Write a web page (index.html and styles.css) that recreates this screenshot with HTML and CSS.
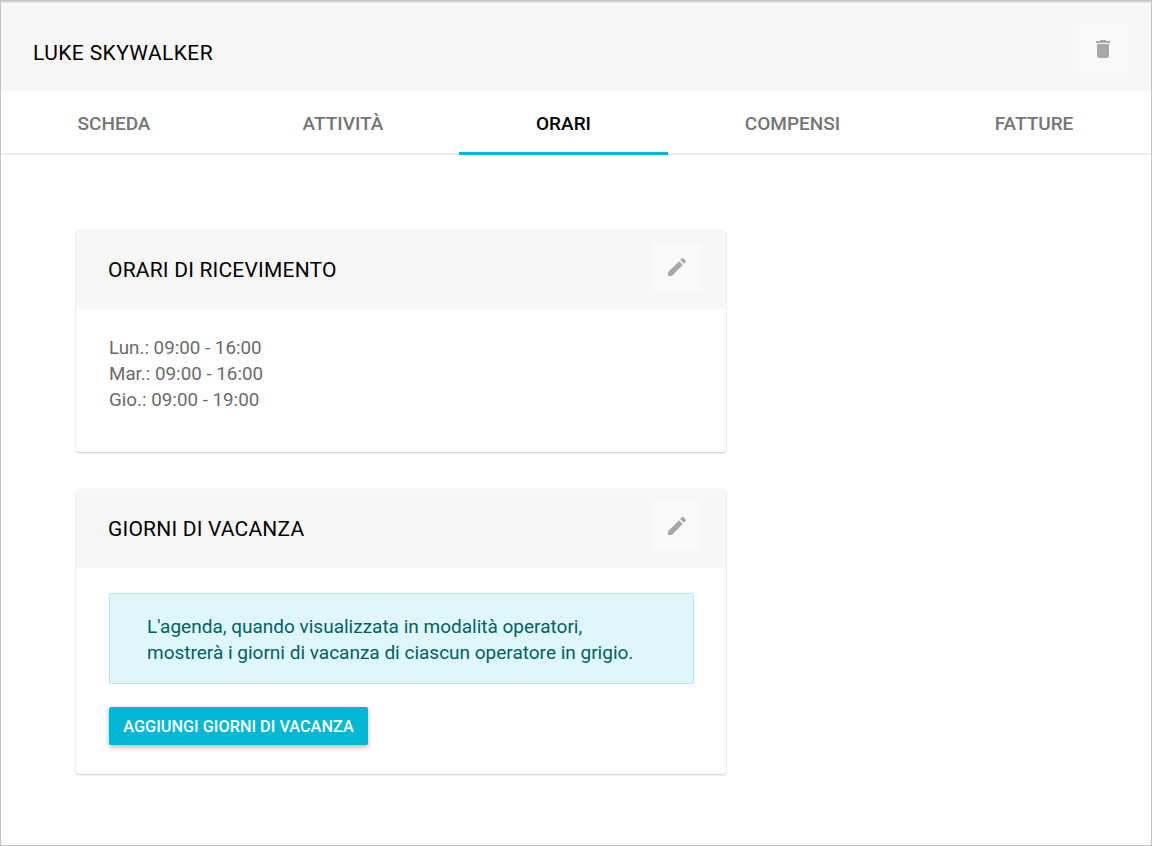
FILE: index.html
```html
<!DOCTYPE html>
<html lang="it">
<head>
<meta charset="utf-8">
<title>Luke Skywalker</title>
<link rel="stylesheet" href="styles.css">
</head>
<body>
<div class="window">
  <header class="top">
    <h1 class="top-title">LUKE SKYWALKER</h1>
    <button class="icon-btn" aria-label="Elimina">
      <svg viewBox="0 0 24 24" width="24" height="24"><path d="M6 19c0 1.100.9 2 2 2h8c1.100 0 2-.9 2-2V7H6v12zM19 4h-3.500l-1-1h-5l-1 1H5v2h14V4z"/></svg>
    </button>
  </header>
  <nav class="tabs">
    <a class="tab">SCHEDA</a>
    <a class="tab">ATTIVITÀ</a>
    <a class="tab tab-active">ORARI</a>
    <a class="tab">COMPENSI</a>
    <a class="tab">FATTURE</a>
  </nav>
  <main class="content">
    <section class="card">
      <div class="card-head">
        <h2 class="card-title">ORARI DI RICEVIMENTO</h2>
        <button class="icon-btn" aria-label="Modifica">
          <svg viewBox="0 0 24 24" width="24" height="24"><path d="M3 17.250V21h3.750L17.810 9.940l-3.750-3.750L3 17.250zM20.710 7.040a1 1 0 0 0 0-1.410l-2.340-2.340a1 1 0 0 0-1.410 0l-1.830 1.830 3.750 3.750 1.830-1.830z"/></svg>
        </button>
      </div>
      <div class="card-body hours">
        <div>Lun.: 09:00 - 16:00</div>
        <div>Mar.: 09:00 - 16:00</div>
        <div>Gio.: 09:00 - 19:00</div>
      </div>
    </section>
    <section class="card">
      <div class="card-head">
        <h2 class="card-title">GIORNI DI VACANZA</h2>
        <button class="icon-btn" aria-label="Modifica">
          <svg viewBox="0 0 24 24" width="24" height="24"><path d="M3 17.250V21h3.750L17.810 9.940l-3.750-3.750L3 17.250zM20.710 7.040a1 1 0 0 0 0-1.410l-2.340-2.340a1 1 0 0 0-1.410 0l-1.830 1.830 3.750 3.750 1.830-1.830z"/></svg>
        </button>
      </div>
      <div class="card-body vacation">
        <div class="notice">L'agenda, quando visualizzata in modalità operatori,<br>mostrerà i giorni di vacanza di ciascun operatore in grigio.</div>
        <button class="primary">AGGIUNGI GIORNI DI VACANZA</button>
      </div>
    </section>
  </main>
</div>
</body>
</html>
```
FILE: styles.css
```css
* { box-sizing: border-box; }
html, body { margin: 0; height: 100%; }
body { background: #fff; font-family: Roboto, "Liberation Sans", sans-serif; }
.window {
  height: 846px;
  border: 1px solid #c4c4c4;
  border-top: 0;
  display: flex;
  flex-direction: column;
  overflow: hidden;
}
.top {
  height: 91px;
  flex: none;
  background: #f7f7f7;
  box-shadow: inset 0 3px 2px -1px #c4c4c4;
  display: flex;
  align-items: center;
  justify-content: space-between;
  padding: 7px 24px 0 32px;
}
.top-title { margin: 8px 0 0; font-size: 21px; font-weight: 400; letter-spacing: .4px; color: #000; }
.icon-btn {
  width: 48px;
  height: 48px;
  padding: 0;
  border: 0;
  background: #fafafa;
  display: flex;
  align-items: center;
  justify-content: center;
  fill: #a8a8a8;
}
.tabs {
  height: 64px;
  flex: none;
  display: grid;
  grid-template-columns: 226px 232px 209px 249px 234px;
  border-bottom: 2px solid #ededed;
}
.tab {
  display: flex;
  align-items: center;
  justify-content: center;
  font-size: 19px;
  font-weight: 500;
  color: #757575;
  margin-bottom: -2px;
  padding-top: 1px;
}
.tab-active { color: #000; box-shadow: inset 0 -3px 0 #00b8d4; }
.content { padding: 75px 0 0 75px; display: flex; flex-direction: column; gap: 37px; }
.card {
  width: 650px;
  background: #fff;
  border-radius: 3px;
  box-shadow: 0 1px 2px rgba(0,0,0,.2), 0 0 1px rgba(0,0,0,.08);
}
.card-head {
  height: 79px;
  background: #f7f7f7;
  display: flex;
  align-items: center;
  justify-content: space-between;
  padding: 0 25px 5px 32px;
  border-radius: 3px 3px 0 0;
}
.card-title { margin: 6px 0 0; font-size: 21px; font-weight: 400; letter-spacing: .2px; color: #000; }
.card-body { padding: 25px 32px 0 33px; font-size: 19px; line-height: 26px; color: #6b6b6b; }
.hours { height: 143px; padding-top: 26px; font-size: 18.800px; }
.vacation { height: 206px; }
.notice {
  height: 91px;
  background: #dff7fb;
  border: 1px solid #b2ebf2;
  border-radius: 2px;
  padding: 20px 37px 0;
  color: #006064;
}
.primary {
  display: block;
  margin-top: 23px;
  height: 38px;
  width: 259px;
  padding: 0;
  border: 0;
  border-radius: 2px;
  background: #00b8d4;
  color: #fff;
  font-family: inherit;
  font-size: 16.300px;
  font-weight: 500;
  box-shadow: 0 2px 5px rgba(0,0,0,.3);
}
```
